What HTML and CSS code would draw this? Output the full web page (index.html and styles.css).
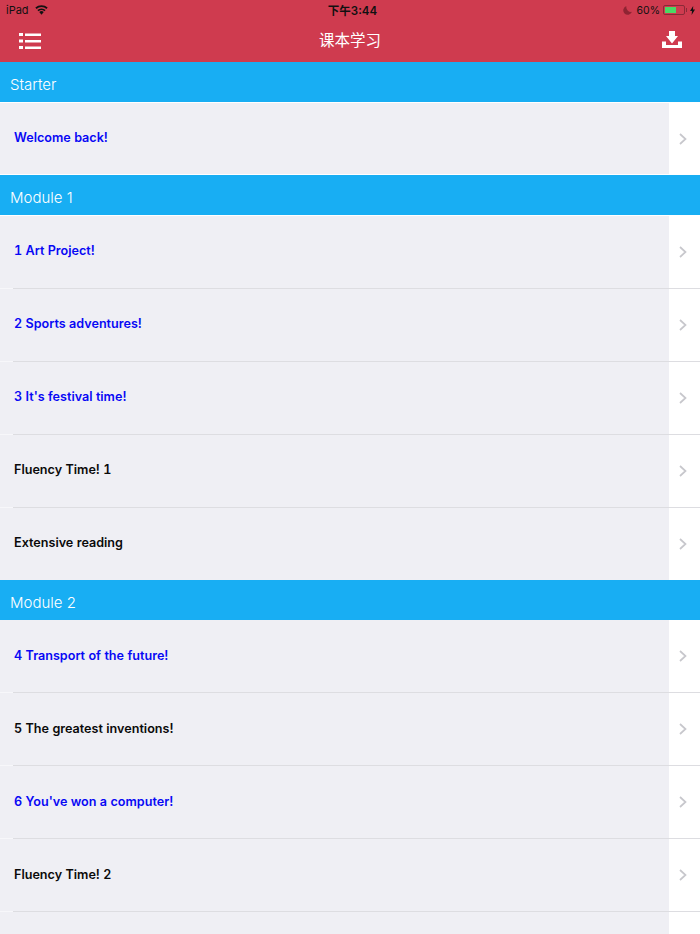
FILE: index.html
```html
<!DOCTYPE html>
<html lang="zh-CN">
<head>
    <meta charset="UTF-8">
    <meta name="viewport" content="width=device-width, initial-scale=1.0">
    <title>课本学习</title>
    <link rel="stylesheet" href="styles.css">
</head>
<body>

<svg class="sprite" width="0" height="0">
    <symbol id="chevron" viewBox="0 0 8 12">
        <path d="M1 1l5.5 5-5.5 5" fill="none" stroke="#c7c7cc" stroke-width="1.7"/>
    </symbol>
</svg>

<div class="app">
    <header class="topbar">
        <div class="status">
            <div class="status-left">
                <span>iPad</span>
                <svg class="wifi" width="13" height="10" viewBox="0 0 14 10">
                    <path d="M7 10 4.6 7.2a3.6 3.6 0 0 1 4.8 0z" fill="#111"/>
                    <path d="M3.2 5.7a5.6 5.6 0 0 1 7.6 0M1 3.1a8.8 8.8 0 0 1 12 0" fill="none" stroke="#111" stroke-width="1.9"/>
                </svg>
            </div>
            <div class="status-time">下午3:44</div>
            <div class="status-right">
                <svg class="moon" width="9" height="9" viewBox="0 0 8 8">
                    <path d="M3 0a4 4 0 1 0 5 5.2A4.4 4.4 0 0 1 3 0z" fill="#8f2433"/>
                </svg>
                <span>60%</span>
                <span class="battery"><span class="battery-level"></span></span>
                <span class="battery-cap"></span>
                <svg class="bolt" width="5" height="9" viewBox="0 0 5 9">
                    <path d="M3.2 0 0 5h2L1.6 9 5 3.6H3z" fill="#111"/>
                </svg>
            </div>
        </div>
        <nav class="nav">
            <svg class="nav-menu" width="22" height="16" viewBox="0 0 22 16">
                <path d="M0 0h4v3H0zM6 .5h16V3H6zM0 6.5h4v3H0zM6 7h16v2.5H6zM0 13h4v3H0zM6 13.5h16V16H6z" fill="#fff"/>
            </svg>
            <h1 class="nav-title">课本学习</h1>
            <svg class="nav-download" width="20" height="17" viewBox="0 0 20 17">
                <path d="M7 0h6v5h3l-6 7.5L4 5h3z" fill="#fff"/>
                <path d="M0 10.5h4V14h12v-3.5h4V17H0z" fill="#fff"/>
            </svg>
        </nav>
    </header>

    <section class="section section-gap">
        <h2 class="section-title">Starter</h2>
        <div class="row row-end"><div class="row-main link">Welcome back!</div><div class="row-side"><svg class="chevron"><use href="#chevron"/></svg></div></div>
    </section>

    <section class="section section-gap">
        <h2 class="section-title">Module 1</h2>
        <div class="row"><div class="row-main link">1 Art Project!</div><div class="row-side"><svg class="chevron"><use href="#chevron"/></svg></div></div>
        <div class="row"><div class="row-main link">2 Sports adventures!</div><div class="row-side"><svg class="chevron"><use href="#chevron"/></svg></div></div>
        <div class="row"><div class="row-main link">3 It's festival time!</div><div class="row-side"><svg class="chevron"><use href="#chevron"/></svg></div></div>
        <div class="row"><div class="row-main">Fluency Time! 1</div><div class="row-side"><svg class="chevron"><use href="#chevron"/></svg></div></div>
        <div class="row row-last"><div class="row-main">Extensive reading</div><div class="row-side"><svg class="chevron"><use href="#chevron"/></svg></div></div>
    </section>

    <section class="section section-flush">
        <h2 class="section-title">Module 2</h2>
        <div class="row"><div class="row-main link">4 Transport of the future!</div><div class="row-side"><svg class="chevron"><use href="#chevron"/></svg></div></div>
        <div class="row"><div class="row-main">5 The greatest inventions!</div><div class="row-side"><svg class="chevron"><use href="#chevron"/></svg></div></div>
        <div class="row"><div class="row-main link">6 You've won a computer!</div><div class="row-side"><svg class="chevron"><use href="#chevron"/></svg></div></div>
        <div class="row"><div class="row-main">Fluency Time! 2</div><div class="row-side"><svg class="chevron"><use href="#chevron"/></svg></div></div>
        <div class="row"><div class="row-main"></div><div class="row-side"></div></div>
    </section>
</div>

</body>
</html>
```

FILE: styles.css
```css
html, body {
    margin: 0;
    height: 100%;
    overflow: hidden;
}
body {
    font-family: Inter, "Noto Sans CJK SC", sans-serif;
    background-color: #fff;
}
.sprite {
    display: block;
}
.app {
    height: 934px;
    overflow: hidden;
}
.topbar {
    height: 62px;
    background-color: #cf3b4f;
}
.status {
    height: 20px;
    display: grid;
    grid-template-columns: 1fr auto 1fr;
    align-items: center;
    padding: 0 5px 0 6px;
    font-size: 11px;
    color: #111;
}
.status-left, .status-right {
    display: flex;
    align-items: center;
}
.status-left {
    gap: 6px;
}
.status-right {
    justify-content: flex-end;
    gap: 3px;
    font-size: 10.5px;
}
.status-time {
    margin-left: 4px;
    font-size: 11.5px;
    font-weight: 600;
}
.moon {
    margin-right: 2px;
}
.battery {
    box-sizing: border-box;
    width: 22px;
    height: 10px;
    padding: 1px;
    border: 1px solid #8a2a38;
    border-radius: 2px;
}
.battery-level {
    display: block;
    width: 60%;
    height: 100%;
    background-color: #4cd964;
}
.battery-cap {
    width: 1px;
    height: 4px;
    margin-left: -2px;
    background-color: #8a2a38;
}
.nav {
    height: 42px;
    display: flex;
    align-items: center;
    justify-content: space-between;
    padding: 0 18px 0 19px;
}
.nav-download {
    margin-bottom: 3px;
}
.nav-title {
    margin: 0 3px 5px 0;
    font-size: 15.5px;
    font-weight: 400;
    color: #fff;
}
.section-title {
    height: 40px;
    margin: 0;
    padding-left: 10px;
    line-height: 45px;
    font-size: 15px;
    font-weight: 300;
    color: #fff;
    background-color: #18aef3;
}
.section-gap {
    --text-top: 26px;
}
.section-gap .section-title {
    margin-bottom: 1px;
}
.section-flush {
    --text-top: 27px;
}
.row {
    height: 73px;
    box-sizing: border-box;
    display: flex;
    border-bottom: 1px solid;
    border-image: linear-gradient(to right, #f7f7fa 14px, #dddde1 14px) 1;
}
.row-end {
    height: 72px;
    border-image: none;
    border-bottom-color: #fff;
}
.row-last {
    height: 72px;
    border-bottom: 0;
}
.row-main {
    flex: 1;
    padding: var(--text-top) 0 0 14px;
    line-height: 18px;
    font-size: 12.6px;
    font-weight: 600;
    font-variant-numeric: tabular-nums;
    color: #0a0a0a;
    background-color: #efeff4;
}
.row-main.link {
    color: #0808f4;
}
.row-side {
    width: 31px;
    display: flex;
    align-items: center;
    justify-content: center;
    background-color: #fff;
}
.chevron {
    width: 8px;
    height: 12px;
    margin-right: 4px;
}
```
